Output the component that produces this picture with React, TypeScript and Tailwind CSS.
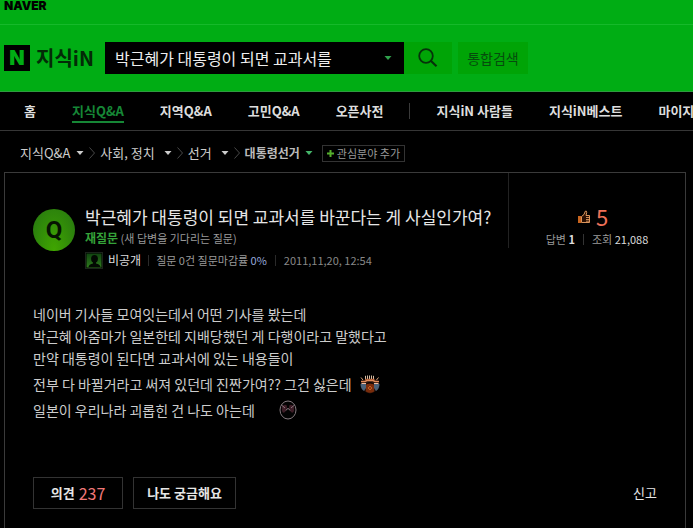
const mainNav = ["지역Q&A", "고민Q&A", "오픈사전"];
const subNav = ["지식iN 사람들", "지식iN베스트", "마이지식"];

const Caret: React.FC<{ className?: string }> = ({ className }) => (
  <svg viewBox="0 0 8 4" className={"h-1 w-2 shrink-0 " + (className ?? "")}>
    <path d="M0.5 0h7L4 4z" fill="currentColor" />
  </svg>
);

const Chevron: React.FC = () => (
  <svg viewBox="0 0 6 12" className="h-3 w-[6px] shrink-0 text-[#484848]">
    <path d="M0.5 0.5L5.5 6L0.5 11.5" fill="none" stroke="currentColor" />
  </svg>
);

const SearchIcon: React.FC = () => (
  <svg viewBox="0 0 20 20" className="size-5">
    <circle cx="8" cy="8" r="6.8" fill="none" stroke="currentColor" strokeWidth="1.8" />
    <path d="M12.800 12.800L18.500 18.300" stroke="currentColor" strokeWidth="2.200" />
  </svg>
);

const ThumbUp: React.FC = () => (
  <svg viewBox="0 0 12 13" className="h-[13px] w-3">
    <rect x="0" y="6" width="3" height="7" fill="#c8641e" />
    <path
      d="M3.500 6.500L6 4.500L7.300 1.200Q8.800 0.600 8.700 2.500L8 5.500H11.500V12.500H3.500z"
      fill="#2a1003"
      stroke="#f0a566"
      strokeWidth="0.900"
    />
    <path d="M8 7.500H11.500M8 9.500H11.500M8 11.200H11" stroke="#f0a566" strokeWidth="0.800" fill="none" />
  </svg>
);

const Avatar: React.FC = () => (
  <svg viewBox="0 0 18 17" className="h-[17px] w-[18px] shrink-0">
    <defs>
      <linearGradient id="avatarBg" x1="0" y1="0" x2="0" y2="1">
        <stop offset="0" stopColor="#104510" />
        <stop offset="1" stopColor="#2f7a1e" />
      </linearGradient>
    </defs>
    <rect x="0.5" y="0.5" width="17" height="16" fill="#000" stroke="#1b241b" />
    <rect x="1.500" y="1.500" width="15" height="14" fill="url(#avatarBg)" />
    <ellipse cx="9.500" cy="6.800" rx="3.400" ry="3.900" fill="#020902" />
    <path d="M8 10h3v1.500q4 0.500 4.500 3.500H3.500q0.500-3 4.500-3.500z" fill="#020902" />
  </svg>
);

const CryingFace: React.FC = () => (
  <svg viewBox="0 0 20 19" className="inline-block h-[19px] w-5">
    <path d="M1 9q0-5 9-5t9 5q0 8-9 9.500Q1 17 1 9z" fill="#2b140c" />
    <path d="M0.500 9h5.500v4l-2 3Q0.500 14 0.500 9z" fill="#4a6178" />
    <path d="M19.500 9h-5.500v4l2 3q3.500-2 3.500-7z" fill="#4a6178" />
    <path d="M5.500 0.800v3.500M7.500 0.500v3.500M9.500 0.500v3.500M11.500 0.500v3.500M13.500 0.800v3.500" stroke="#eed1b6" strokeWidth="0.900" />
    <path d="M5 4.300h9.500" stroke="#c96a3c" />
    <path d="M1 2.500l2 2.500M18.500 2.500l-2 2.500" stroke="#d9a27c" />
    <path d="M1 6.500h4l2-1h6l2 1h4" fill="none" stroke="#e08a5a" strokeWidth="1.400" />
    <path d="M1.500 8.500h4.500M14 8.500h4.500" stroke="#f3bda0" />
    <path d="M6 10q4-5 8 0v6.500q-4 2.500-8 0z" fill="#7a2c0b" />
    <path d="M6.500 9q3.500-4 7 0l-3.500-0.500z" fill="#090302" />
    <path d="M10 11l2 2l-2 2l-2-2z" fill="#8d340d" stroke="#dc6d28" strokeWidth="0.700" />
  </svg>
);

const BlushFace: React.FC = () => (
  <svg viewBox="0 0 18 20" className="inline-block h-5 w-[18px]">
    <ellipse cx="9" cy="10" rx="8" ry="9" fill="#030303" stroke="#857a7f" />
    <path d="M3 9q-1-3 2-4t3 2q0 3-2 5t-3-1zM15 9q1-3-2-4t-3 2q0 3 2 5t3-1z" fill="#3d1d27" />
    <path
      d="M2.500 5l3.500 3M15.500 5l-3.500 3"
      stroke="#a08c93"
      strokeWidth="0.800"
      fill="none"
    />
    <path d="M7 10.500q2-4 4 0" fill="none" stroke="#807278" />
  </svg>
);

const Header: React.FC = () => (
  <header className="bg-[#00ad14]">
    <div className="flex h-[25px] items-start border-b border-[#16b92b] px-1">
      <a
        href="#"
        className="-mt-[2px] font-[Inter,sans-serif] text-xs font-black text-black"
      >
        NAVER
      </a>
    </div>
    <div className="flex h-[66px] items-center px-1">
      <a href="#" className="flex w-[101px] items-center gap-[6px] text-[#032b07]">
        <span className="flex size-[26px] items-center justify-center bg-black font-[Inter,sans-serif] text-xl leading-5 font-black text-[#00ad14]">
          N
        </span>
        <span className="text-xl leading-6 font-bold">지식iN</span>
      </a>
      <form className="flex items-center" onSubmit={(e) => e.preventDefault()}>
        <div className="flex h-8 w-[299px] items-center bg-black pr-3 pl-[10px]">
          <input
            aria-label="검색어"
            defaultValue="박근혜가 대통령이 되면 교과서를"
            className="min-w-0 flex-1 bg-transparent text-base leading-6 text-[#eee] outline-none"
          />
          <button type="button" aria-label="자동완성 펼치기" className="text-[#30a04c]">
            <Caret />
          </button>
        </div>
        <button
          aria-label="검색"
          className="flex h-8 w-12 items-center justify-center bg-[#00a406] text-[#06320a]"
        >
          <SearchIcon />
        </button>
        <button
          type="button"
          className="ml-[6px] h-8 w-[70px] bg-[#00a406] text-sm text-[#064c0d]"
        >
          통합검색
        </button>
      </form>
    </div>
  </header>
);

const Nav: React.FC = () => (
  <nav className="border-t border-b border-t-[#2f9a40] border-b-[#363636]">
    <ul className="flex h-[38px] items-center gap-9 pl-6 text-[13px] leading-5 font-bold text-[#ddd]">
      <li>
        <a href="#">홈</a>
      </li>
      <li>
        <a
          href="#"
          className="block border-b-2 border-[#168736] pt-[2px] text-[#168736]"
        >
          지식Q&A
        </a>
      </li>
      {mainNav.map((label) => (
        <li key={label}>
          <a href="#">{label}</a>
        </li>
      ))}
      <li className="-mx-[10px] h-4 w-px shrink-0 bg-[#3a3a3a]" />
      {subNav.map((label) => (
        <li key={label}>
          <a href="#">{label}</a>
        </li>
      ))}
    </ul>
  </nav>
);

const Breadcrumb: React.FC = () => (
  <div className="flex h-[41px] items-center gap-[5px] pt-[3px] pl-5 text-[13px] leading-5 text-[#ccc]">
    <a href="#" className="flex items-center gap-[6px]">
      지식Q&A <Caret />
    </a>
    <Chevron />
    <a href="#" className="flex items-center gap-[9px]">
      사회, 정치 <Caret />
    </a>
    <Chevron />
    <a href="#" className="flex items-center gap-[9px]">
      선거 <Caret />
    </a>
    <Chevron />
    <a href="#" className="flex items-center gap-[5px] text-xs leading-5 font-bold text-[#bbb]">
      대통령선거 <Caret className="text-[#45b56a]" />
    </a>
    <button className="ml-1 flex h-[17px] items-center gap-[3px] border border-[#333] px-1 text-[11px] leading-4 text-[#999]">
      <svg viewBox="0 0 7 7" className="size-[7px]">
        <path d="M3.500 0V7M0 3.500H7" stroke="#55ae2d" strokeWidth="2" />
      </svg>
      관심분야 추가
    </button>
  </div>
);

const QuestionHead: React.FC = () => (
  <div className="flex items-start">
    <div className="flex min-w-0 flex-1 gap-[10px] pt-8 pl-7">
      <div className="mt-1 flex size-[42px] shrink-0 items-center justify-center rounded-full bg-radial-[at_50%_100%] from-[#40a600] to-[#257511] font-[Roboto,sans-serif] text-2xl leading-none font-bold text-[#061402]">
        Q
      </div>
      <div>
        <h1 className="text-[17px] leading-6 text-[#e6e6e6]">
          박근혜가 대통령이 되면 교과서를 바꾼다는 게 사실인가여?
        </h1>
        <p className="text-[11px] leading-[18px] text-[#999]">
          <strong className="text-xs leading-[18px] text-[#35a339]">재질문</strong>{" "}
          (새 답변을 기다리는 질문)
        </p>
        <div className="mt-1 flex h-[18px] items-center text-[11px] leading-[18px] text-[#999]">
          <Avatar />
          <span className="ml-[5px] text-xs leading-[18px] text-[#ddd]">비공개</span>
          <span className="mx-[7px] h-[11px] w-px bg-[#2a2a2a]" />
          <span>
            질문 0건 질문마감률 <span className="text-[#96a9dc]">0%</span>
          </span>
          <span className="mx-2 h-[11px] w-px bg-[#2a2a2a]" />
          <span className="text-[#888]">2011,11,20, 12:54</span>
        </div>
      </div>
    </div>
    <div className="flex h-[75px] w-[177px] shrink-0 flex-col items-center border-l border-[#222] pt-[31px]">
      <div className="flex items-center gap-[6px] pr-2 text-[22px] leading-6 text-[#ef7158]">
        <ThumbUp />
        <span>5</span>
      </div>
      <div className="flex items-center text-[11px] leading-[22px] text-[#999]">
        <span>
          답변 <strong className="text-[#ddd]">1</strong>
        </span>
        <span className="mx-2 h-[11px] w-px bg-[#333]" />
        <span>
          조회 <span className="text-[#ddd]">21,088</span>
        </span>
      </div>
    </div>
  </div>
);

export default function App() {
  return (
    <div className="flex min-h-screen flex-col overflow-hidden bg-black font-['Noto_Sans_CJK_KR',sans-serif] whitespace-nowrap">
      <Header />
      <Nav />
      <Breadcrumb />
      <main className="mr-[7px] ml-1 flex-1 border border-b-0 border-[#3a3a3a]">
        <QuestionHead />
        <div className="mt-[34px] px-7 text-sm leading-[22px] text-[#ccc]">
          <p>네이버 기사들 모여잇는데서 어떤 기사를 봤는데</p>
          <p>박근혜 아줌마가 일본한테 지배당했던 게 다행이라고 말했다고</p>
          <p>만약 대통령이 된다면 교과서에 있는 내용들이</p>
          <p className="flex h-[26px] items-center gap-2 pt-1">
            전부 다 바뀔거라고 써져 있던데 진짠가여?? 그건 싫은데
            <CryingFace />
          </p>
          <p className="flex h-[26px] items-center gap-6 pt-1">
            일본이 우리나라 괴롭힌 건 나도 아는데
            <BlushFace />
          </p>
        </div>
        <div className="mt-14 flex items-center gap-[10px] px-7 text-[13px] text-[#e6e6e6]">
          <button className="flex h-8 w-[90px] items-center justify-center gap-1 border border-[#333] font-bold">
            의견 <span className="text-base font-normal text-[#f07878]">237</span>
          </button>
          <button className="h-8 w-[103px] border border-[#333] font-bold">
            나도 궁금해요
          </button>
          <a href="#" className="ml-auto">
            신고
          </a>
        </div>
      </main>
    </div>
  );
}
